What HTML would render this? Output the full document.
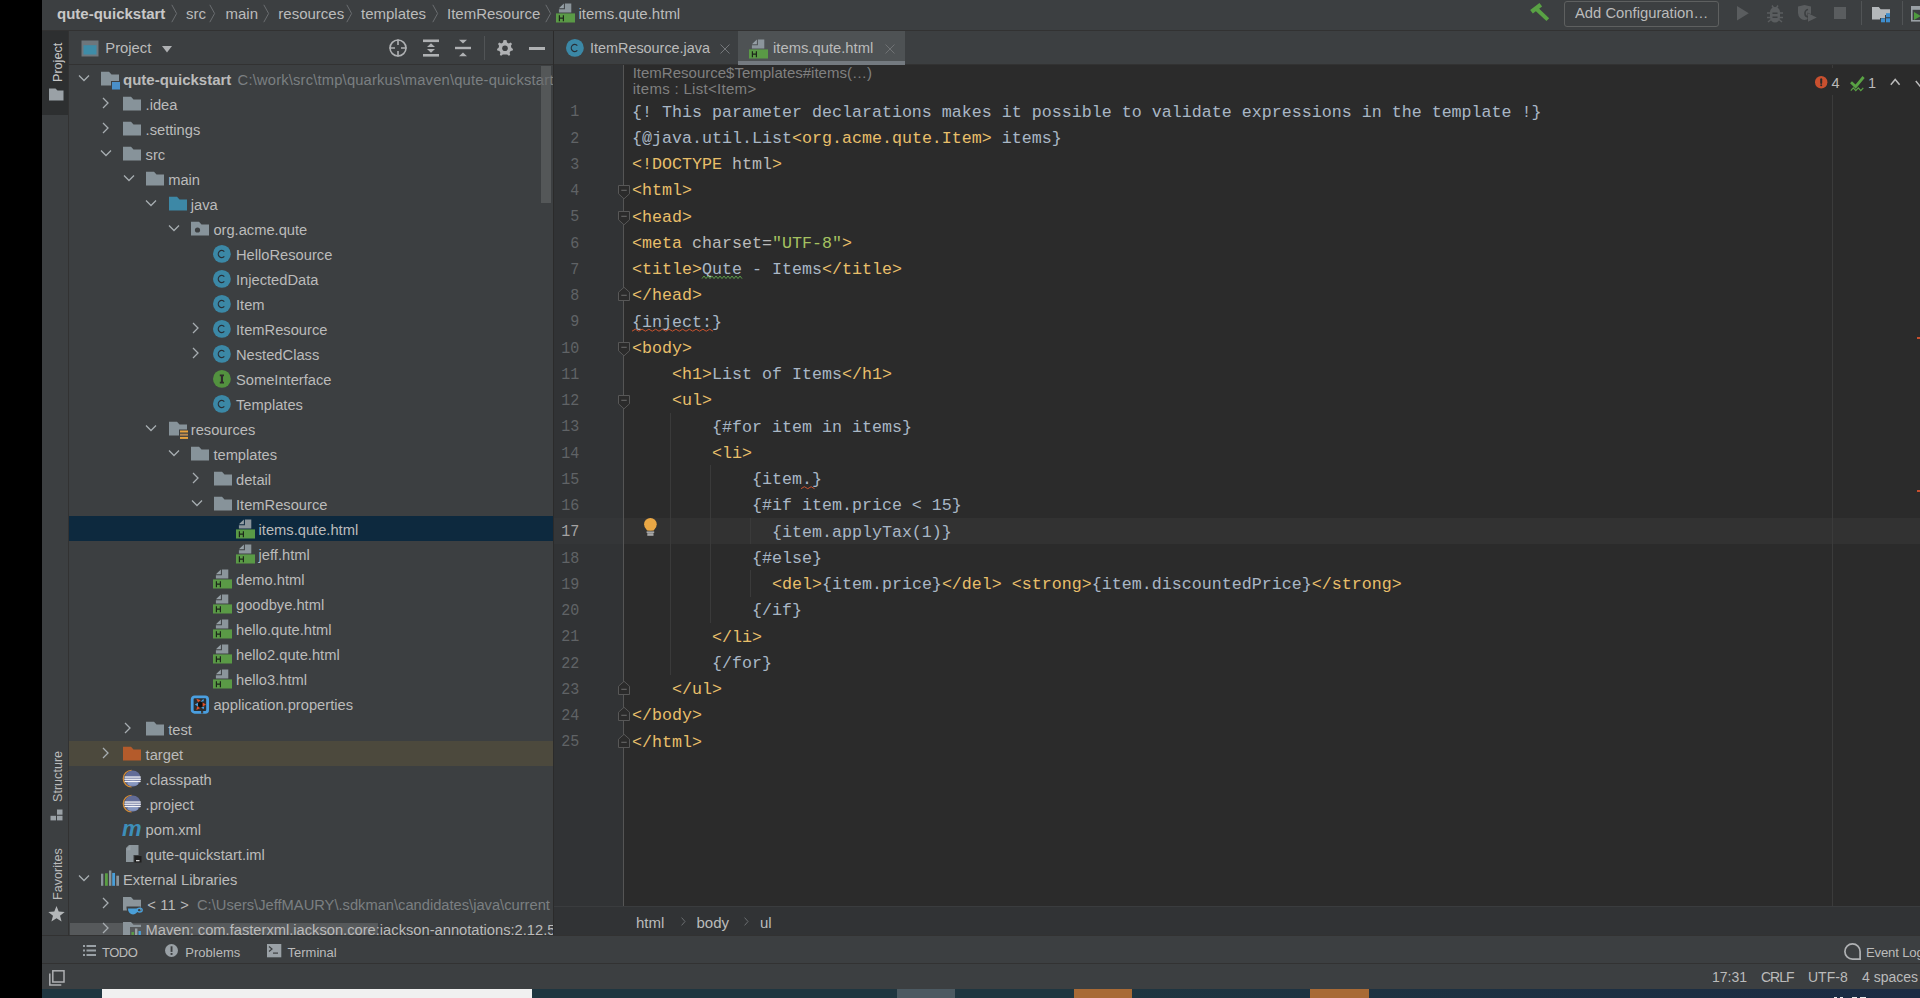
<!DOCTYPE html><html><head><meta charset="utf-8"><style>
*{margin:0;padding:0;box-sizing:border-box}
html,body{width:1920px;height:998px;overflow:hidden;background:#000}
body{position:relative;font-family:"Liberation Sans", sans-serif;color:#bbbbbb}
.a{position:absolute}
.t{position:absolute;white-space:pre;line-height:1}
svg{position:absolute;overflow:visible}
.c{font-family:"Liberation Mono", monospace;font-size:16.667px;white-space:pre;position:absolute;line-height:1;color:#a9b7c6}
.y{color:#e8bf6a} .ga{color:#bababa} .gr{color:#a5c261}
</style></head><body>
<div class="a" style="left:42px;top:0px;width:1878px;height:998px;background:#3c3f41;"></div>
<div class="a" style="left:42px;top:30px;width:1878px;height:1px;background:#323232;"></div>
<div class="a" style="left:42px;top:31px;width:26px;height:84px;background:#2d2f30;"></div>
<div class="a" style="left:68px;top:31px;width:1px;height:904px;background:#323232;"></div>
<div class="a" style="left:69px;top:64px;width:484px;height:1px;background:#323232;"></div>
<div class="a" style="left:553px;top:31px;width:1px;height:904px;background:#2b2b2b;"></div>
<div class="a" style="left:554px;top:64px;width:1366px;height:1px;background:#323232;"></div>
<div class="a" style="left:554px;top:65px;width:1366px;height:841px;background:#2b2b2b;"></div>
<div class="a" style="left:554px;top:65px;width:69px;height:841px;background:#313335;"></div>
<div class="a" style="left:554px;top:906px;width:1366px;height:29px;background:#313335;"></div>
<div class="a" style="left:554px;top:906px;width:1366px;height:1px;background:#3a3c3e;"></div>
<div class="a" style="left:42px;top:935px;width:1878px;height:28px;background:#3c3f41;"></div>
<div class="a" style="left:42px;top:935px;width:1878px;height:1px;background:#323232;"></div>
<div class="a" style="left:42px;top:963px;width:1878px;height:26px;background:#3c3f41;"></div>
<div class="a" style="left:42px;top:963px;width:1878px;height:1px;background:#323232;"></div>
<div class="a" style="left:42px;top:989px;width:1878px;height:9px;background:#1b2f3a;"></div>
<div class="a" style="left:69px;top:65px;width:484px;height:870px;overflow:hidden">
<div class="a" style="left:0px;top:451px;width:484px;height:25px;background:#0d293e;"></div>
<div class="a" style="left:0px;top:676px;width:484px;height:25px;background:#4c493d;"></div>
<div class="a" style="left:1px;top:858.4px;width:308px;height:11.6px;background:#56595b;"></div>
<svg style="left:8.500000000000004px;top:9.0px" width="12" height="8" viewBox="0 0 12 8"><path d="M1 1.5L6 6.5L11 1.5" fill="none" stroke="#a7adb1" stroke-width="1.3"/></svg>
<svg style="left:31.700000000000003px;top:4.5px" width="20" height="20" viewBox="0 0 20 20"><path d="M0 1.7H8L10.5 4.5H18V15.5H0Z" fill="#87939a"/><rect x="10" y="11" width="10.5" height="9.5" fill="#3c3f41"/><rect x="11" y="12" width="8" height="7.5" fill="#4a8fc8"/></svg>
<div class="t" style="left:54.0px;top:7.40px;font-size:15px;color:#bbbbbb;font-weight:bold;">qute-quickstart</div>
<div class="t" style="left:168.6px;top:7.66px;font-size:14.7px;color:#7b7f82;font-weight:normal;letter-spacing:0.2px">C:\work\src\tmp\quarkus\maven\qute-quickstart</div>
<svg style="left:32.500000000000014px;top:31.7px" width="8" height="12" viewBox="0 0 8 12"><path d="M1 1L6 6L1 11" fill="none" stroke="#a7adb1" stroke-width="1.3"/></svg>
<svg style="left:54.30000000000001px;top:29.5px" width="20" height="20" viewBox="0 0 20 20"><path d="M0 1.7H8L10.5 4.5H18V15.5H0Z" fill="#87939a"/></svg>
<div class="t" style="left:76.60000000000002px;top:32.66px;font-size:14.7px;color:#bbbbbb;font-weight:normal;">.idea</div>
<svg style="left:32.500000000000014px;top:56.7px" width="8" height="12" viewBox="0 0 8 12"><path d="M1 1L6 6L1 11" fill="none" stroke="#a7adb1" stroke-width="1.3"/></svg>
<svg style="left:54.30000000000001px;top:54.5px" width="20" height="20" viewBox="0 0 20 20"><path d="M0 1.7H8L10.5 4.5H18V15.5H0Z" fill="#87939a"/></svg>
<div class="t" style="left:76.60000000000002px;top:57.66px;font-size:14.7px;color:#bbbbbb;font-weight:normal;">.settings</div>
<svg style="left:31.100000000000012px;top:84.0px" width="12" height="8" viewBox="0 0 12 8"><path d="M1 1.5L6 6.5L11 1.5" fill="none" stroke="#a7adb1" stroke-width="1.3"/></svg>
<svg style="left:54.30000000000001px;top:79.5px" width="20" height="20" viewBox="0 0 20 20"><path d="M0 1.7H8L10.5 4.5H18V15.5H0Z" fill="#87939a"/></svg>
<div class="t" style="left:76.60000000000002px;top:82.66px;font-size:14.7px;color:#bbbbbb;font-weight:normal;">src</div>
<svg style="left:53.7px;top:109.0px" width="12" height="8" viewBox="0 0 12 8"><path d="M1 1.5L6 6.5L11 1.5" fill="none" stroke="#a7adb1" stroke-width="1.3"/></svg>
<svg style="left:76.9px;top:104.5px" width="20" height="20" viewBox="0 0 20 20"><path d="M0 1.7H8L10.5 4.5H18V15.5H0Z" fill="#87939a"/></svg>
<div class="t" style="left:99.20000000000002px;top:107.66px;font-size:14.7px;color:#bbbbbb;font-weight:normal;">main</div>
<svg style="left:76.3px;top:134.0px" width="12" height="8" viewBox="0 0 12 8"><path d="M1 1.5L6 6.5L11 1.5" fill="none" stroke="#a7adb1" stroke-width="1.3"/></svg>
<svg style="left:99.5px;top:129.5px" width="20" height="20" viewBox="0 0 20 20"><path d="M0 1.7H8L10.5 4.5H18V15.5H0Z" fill="#3d88a6"/></svg>
<div class="t" style="left:121.80000000000001px;top:132.66px;font-size:14.7px;color:#bbbbbb;font-weight:normal;">java</div>
<svg style="left:98.90000000000002px;top:159.0px" width="12" height="8" viewBox="0 0 12 8"><path d="M1 1.5L6 6.5L11 1.5" fill="none" stroke="#a7adb1" stroke-width="1.3"/></svg>
<svg style="left:122.10000000000002px;top:154.5px" width="20" height="20" viewBox="0 0 20 20"><path d="M0 1.7H8L10.5 4.5H18V15.5H0Z" fill="#87939a"/><circle cx="6.5" cy="10" r="2.6" fill="#3c3f41"/></svg>
<div class="t" style="left:144.40000000000003px;top:157.66px;font-size:14.7px;color:#bbbbbb;font-weight:normal;">org.acme.qute</div>
<svg style="left:143.89999999999998px;top:179.5px" width="20" height="20" viewBox="0 0 20 20"><circle cx="8.9" cy="8.9" r="8.9" fill="#3b88a6"/><path d="M11.3 6.6A3.4 3.7 0 1 0 11.3 11.4" fill="none" stroke="#283038" stroke-width="1.25"/></svg>
<div class="t" style="left:167.0px;top:182.66px;font-size:14.7px;color:#bbbbbb;font-weight:normal;">HelloResource</div>
<svg style="left:143.89999999999998px;top:204.5px" width="20" height="20" viewBox="0 0 20 20"><circle cx="8.9" cy="8.9" r="8.9" fill="#3b88a6"/><path d="M11.3 6.6A3.4 3.7 0 1 0 11.3 11.4" fill="none" stroke="#283038" stroke-width="1.25"/></svg>
<div class="t" style="left:167.0px;top:207.66px;font-size:14.7px;color:#bbbbbb;font-weight:normal;">InjectedData</div>
<svg style="left:143.89999999999998px;top:229.5px" width="20" height="20" viewBox="0 0 20 20"><circle cx="8.9" cy="8.9" r="8.9" fill="#3b88a6"/><path d="M11.3 6.6A3.4 3.7 0 1 0 11.3 11.4" fill="none" stroke="#283038" stroke-width="1.25"/></svg>
<div class="t" style="left:167.0px;top:232.66px;font-size:14.7px;color:#bbbbbb;font-weight:normal;">Item</div>
<svg style="left:122.89999999999999px;top:256.7px" width="8" height="12" viewBox="0 0 8 12"><path d="M1 1L6 6L1 11" fill="none" stroke="#a7adb1" stroke-width="1.3"/></svg>
<svg style="left:143.89999999999998px;top:254.5px" width="20" height="20" viewBox="0 0 20 20"><circle cx="8.9" cy="8.9" r="8.9" fill="#3b88a6"/><path d="M11.3 6.6A3.4 3.7 0 1 0 11.3 11.4" fill="none" stroke="#283038" stroke-width="1.25"/></svg>
<div class="t" style="left:167.0px;top:257.66px;font-size:14.7px;color:#bbbbbb;font-weight:normal;">ItemResource</div>
<svg style="left:122.89999999999999px;top:281.7px" width="8" height="12" viewBox="0 0 8 12"><path d="M1 1L6 6L1 11" fill="none" stroke="#a7adb1" stroke-width="1.3"/></svg>
<svg style="left:143.89999999999998px;top:279.5px" width="20" height="20" viewBox="0 0 20 20"><circle cx="8.9" cy="8.9" r="8.9" fill="#3b88a6"/><path d="M11.3 6.6A3.4 3.7 0 1 0 11.3 11.4" fill="none" stroke="#283038" stroke-width="1.25"/></svg>
<div class="t" style="left:167.0px;top:282.66px;font-size:14.7px;color:#bbbbbb;font-weight:normal;">NestedClass</div>
<svg style="left:143.89999999999998px;top:304.5px" width="20" height="20" viewBox="0 0 20 20"><circle cx="8.9" cy="8.9" r="8.9" fill="#53923f"/><path d="M6.8 5.4H11M8.9 5.4V12.6M6.8 12.6H11" fill="none" stroke="#2e2b2b" stroke-width="1.7"/><rect x="7.9" y="5" width="2.1" height="8" fill="#2e2b2b"/></svg>
<div class="t" style="left:167.0px;top:307.66px;font-size:14.7px;color:#bbbbbb;font-weight:normal;">SomeInterface</div>
<svg style="left:143.89999999999998px;top:329.5px" width="20" height="20" viewBox="0 0 20 20"><circle cx="8.9" cy="8.9" r="8.9" fill="#3b88a6"/><path d="M11.3 6.6A3.4 3.7 0 1 0 11.3 11.4" fill="none" stroke="#283038" stroke-width="1.25"/></svg>
<div class="t" style="left:167.0px;top:332.66px;font-size:14.7px;color:#bbbbbb;font-weight:normal;">Templates</div>
<svg style="left:76.3px;top:359.0px" width="12" height="8" viewBox="0 0 12 8"><path d="M1 1.5L6 6.5L11 1.5" fill="none" stroke="#a7adb1" stroke-width="1.3"/></svg>
<svg style="left:99.5px;top:354.5px" width="20" height="20" viewBox="0 0 20 20"><path d="M0 1.7H8L10.5 4.5H18V15.5H0Z" fill="#87939a"/><rect x="10" y="9.5" width="10" height="11" fill="#3c3f41"/><rect x="11" y="10.5" width="8" height="2" fill="#e8a33d"/><rect x="11" y="13.7" width="8" height="2" fill="#b98a52"/><rect x="11" y="16.9" width="8" height="2" fill="#e8a33d"/></svg>
<div class="t" style="left:121.80000000000001px;top:357.66px;font-size:14.7px;color:#bbbbbb;font-weight:normal;">resources</div>
<svg style="left:98.90000000000002px;top:384.0px" width="12" height="8" viewBox="0 0 12 8"><path d="M1 1.5L6 6.5L11 1.5" fill="none" stroke="#a7adb1" stroke-width="1.3"/></svg>
<svg style="left:122.10000000000002px;top:379.5px" width="20" height="20" viewBox="0 0 20 20"><path d="M0 1.7H8L10.5 4.5H18V15.5H0Z" fill="#87939a"/></svg>
<div class="t" style="left:144.40000000000003px;top:382.66px;font-size:14.7px;color:#bbbbbb;font-weight:normal;">templates</div>
<svg style="left:122.89999999999999px;top:406.7px" width="8" height="12" viewBox="0 0 8 12"><path d="M1 1L6 6L1 11" fill="none" stroke="#a7adb1" stroke-width="1.3"/></svg>
<svg style="left:144.7px;top:404.5px" width="20" height="20" viewBox="0 0 20 20"><path d="M0 1.7H8L10.5 4.5H18V15.5H0Z" fill="#87939a"/></svg>
<div class="t" style="left:167.0px;top:407.66px;font-size:14.7px;color:#bbbbbb;font-weight:normal;">detail</div>
<svg style="left:121.49999999999999px;top:434.0px" width="12" height="8" viewBox="0 0 12 8"><path d="M1 1.5L6 6.5L11 1.5" fill="none" stroke="#a7adb1" stroke-width="1.3"/></svg>
<svg style="left:144.7px;top:429.5px" width="20" height="20" viewBox="0 0 20 20"><path d="M0 1.7H8L10.5 4.5H18V15.5H0Z" fill="#87939a"/></svg>
<div class="t" style="left:167.0px;top:432.66px;font-size:14.7px;color:#bbbbbb;font-weight:normal;">ItemResource</div>
<svg style="left:166.60000000000002px;top:454.0px" width="20" height="20" viewBox="0 0 20 20"><path d="M2.9 5.2L7.9 0.4V5.2Z" fill="#96a0a6"/><path d="M8.9 0.4H15.3V9.5H2.9V6.3H8.9Z" fill="#8b959b"/><rect x="0" y="10.4" width="19" height="9.1" fill="#5a9a46"/><path d="M3.4 12.3V18.3M7.4 12.3V18.3M3.4 15.2H7.4" stroke="#1d261a" stroke-width="1.2" fill="none"/></svg>
<div class="t" style="left:189.60000000000002px;top:457.66px;font-size:14.7px;color:#bbbbbb;font-weight:normal;">items.qute.html</div>
<svg style="left:166.60000000000002px;top:479.0px" width="20" height="20" viewBox="0 0 20 20"><path d="M2.9 5.2L7.9 0.4V5.2Z" fill="#96a0a6"/><path d="M8.9 0.4H15.3V9.5H2.9V6.3H8.9Z" fill="#8b959b"/><rect x="0" y="10.4" width="19" height="9.1" fill="#5a9a46"/><path d="M3.4 12.3V18.3M7.4 12.3V18.3M3.4 15.2H7.4" stroke="#1d261a" stroke-width="1.2" fill="none"/></svg>
<div class="t" style="left:189.60000000000002px;top:482.66px;font-size:14.7px;color:#bbbbbb;font-weight:normal;">jeff.html</div>
<svg style="left:144.0px;top:504.0px" width="20" height="20" viewBox="0 0 20 20"><path d="M2.9 5.2L7.9 0.4V5.2Z" fill="#96a0a6"/><path d="M8.9 0.4H15.3V9.5H2.9V6.3H8.9Z" fill="#8b959b"/><rect x="0" y="10.4" width="19" height="9.1" fill="#5a9a46"/><path d="M3.4 12.3V18.3M7.4 12.3V18.3M3.4 15.2H7.4" stroke="#1d261a" stroke-width="1.2" fill="none"/></svg>
<div class="t" style="left:167.0px;top:507.66px;font-size:14.7px;color:#bbbbbb;font-weight:normal;">demo.html</div>
<svg style="left:144.0px;top:529.0px" width="20" height="20" viewBox="0 0 20 20"><path d="M2.9 5.2L7.9 0.4V5.2Z" fill="#96a0a6"/><path d="M8.9 0.4H15.3V9.5H2.9V6.3H8.9Z" fill="#8b959b"/><rect x="0" y="10.4" width="19" height="9.1" fill="#5a9a46"/><path d="M3.4 12.3V18.3M7.4 12.3V18.3M3.4 15.2H7.4" stroke="#1d261a" stroke-width="1.2" fill="none"/></svg>
<div class="t" style="left:167.0px;top:532.66px;font-size:14.7px;color:#bbbbbb;font-weight:normal;">goodbye.html</div>
<svg style="left:144.0px;top:554.0px" width="20" height="20" viewBox="0 0 20 20"><path d="M2.9 5.2L7.9 0.4V5.2Z" fill="#96a0a6"/><path d="M8.9 0.4H15.3V9.5H2.9V6.3H8.9Z" fill="#8b959b"/><rect x="0" y="10.4" width="19" height="9.1" fill="#5a9a46"/><path d="M3.4 12.3V18.3M7.4 12.3V18.3M3.4 15.2H7.4" stroke="#1d261a" stroke-width="1.2" fill="none"/></svg>
<div class="t" style="left:167.0px;top:557.66px;font-size:14.7px;color:#bbbbbb;font-weight:normal;">hello.qute.html</div>
<svg style="left:144.0px;top:579.0px" width="20" height="20" viewBox="0 0 20 20"><path d="M2.9 5.2L7.9 0.4V5.2Z" fill="#96a0a6"/><path d="M8.9 0.4H15.3V9.5H2.9V6.3H8.9Z" fill="#8b959b"/><rect x="0" y="10.4" width="19" height="9.1" fill="#5a9a46"/><path d="M3.4 12.3V18.3M7.4 12.3V18.3M3.4 15.2H7.4" stroke="#1d261a" stroke-width="1.2" fill="none"/></svg>
<div class="t" style="left:167.0px;top:582.66px;font-size:14.7px;color:#bbbbbb;font-weight:normal;">hello2.qute.html</div>
<svg style="left:144.0px;top:604.0px" width="20" height="20" viewBox="0 0 20 20"><path d="M2.9 5.2L7.9 0.4V5.2Z" fill="#96a0a6"/><path d="M8.9 0.4H15.3V9.5H2.9V6.3H8.9Z" fill="#8b959b"/><rect x="0" y="10.4" width="19" height="9.1" fill="#5a9a46"/><path d="M3.4 12.3V18.3M7.4 12.3V18.3M3.4 15.2H7.4" stroke="#1d261a" stroke-width="1.2" fill="none"/></svg>
<div class="t" style="left:167.0px;top:607.66px;font-size:14.7px;color:#bbbbbb;font-weight:normal;">hello3.html</div>
<svg style="left:122.10000000000002px;top:629.5px" width="20" height="20" viewBox="0 0 20 20"><rect x="1.2" y="1.9" width="15.4" height="15.4" rx="2.4" fill="#2b2e30" stroke="#4a9fe0" stroke-width="2.8"/><circle cx="9.6" cy="9.6" r="2.6" fill="#111"/><path d="M5.3 3.8L9.8 5.3L7 7.3Z M15 9.6L11.6 7.6L11.6 11.8Z M5.3 15L6.4 11L9 13.2Z" fill="#e0502a"/><path d="M12.5 3.8L9.5 6.8L12.8 6.2Z M3.8 9.6L7 7.8L7 11.4Z M12.6 14.3L10.2 12.6L13.3 11.5Z" fill="#4a9fe0"/><rect x="10" y="16" width="2.2" height="2.5" fill="#3c3f41"/></svg>
<div class="t" style="left:144.40000000000003px;top:632.66px;font-size:14.7px;color:#bbbbbb;font-weight:normal;">application.properties</div>
<svg style="left:55.10000000000001px;top:656.7px" width="8" height="12" viewBox="0 0 8 12"><path d="M1 1L6 6L1 11" fill="none" stroke="#a7adb1" stroke-width="1.3"/></svg>
<svg style="left:76.9px;top:654.5px" width="20" height="20" viewBox="0 0 20 20"><path d="M0 1.7H8L10.5 4.5H18V15.5H0Z" fill="#87939a"/></svg>
<div class="t" style="left:99.20000000000002px;top:657.66px;font-size:14.7px;color:#bbbbbb;font-weight:normal;">test</div>
<svg style="left:32.500000000000014px;top:681.7px" width="8" height="12" viewBox="0 0 8 12"><path d="M1 1L6 6L1 11" fill="none" stroke="#a7adb1" stroke-width="1.3"/></svg>
<svg style="left:54.30000000000001px;top:679.5px" width="20" height="20" viewBox="0 0 20 20"><path d="M0 1.7H8L10.5 4.5H18V15.5H0Z" fill="#b45b2b"/></svg>
<div class="t" style="left:76.60000000000002px;top:682.66px;font-size:14.7px;color:#bbbbbb;font-weight:normal;">target</div>
<svg style="left:54.30000000000001px;top:704.5px" width="20" height="20" viewBox="0 0 20 20"><path d="M8.6 0.3A8.3 8.3 0 0 0 8.6 16.9" fill="none" stroke="#d28b36" stroke-width="1.3"/><circle cx="9.6" cy="8.6" r="8.1" fill="#626c97"/><ellipse cx="9.8" cy="13.2" rx="5.2" ry="2.6" fill="#8797c0"/><rect x="1.5" y="6.4" width="16.2" height="1.3" fill="#f2f2f6"/><rect x="1.3" y="8.6" width="16.6" height="1.3" fill="#f2f2f6"/><rect x="1.6" y="10.8" width="16" height="1.3" fill="#f2f2f6"/></svg>
<div class="t" style="left:76.60000000000002px;top:707.66px;font-size:14.7px;color:#bbbbbb;font-weight:normal;">.classpath</div>
<svg style="left:54.30000000000001px;top:729.5px" width="20" height="20" viewBox="0 0 20 20"><path d="M8.6 0.3A8.3 8.3 0 0 0 8.6 16.9" fill="none" stroke="#d28b36" stroke-width="1.3"/><circle cx="9.6" cy="8.6" r="8.1" fill="#626c97"/><ellipse cx="9.8" cy="13.2" rx="5.2" ry="2.6" fill="#8797c0"/><rect x="1.5" y="6.4" width="16.2" height="1.3" fill="#f2f2f6"/><rect x="1.3" y="8.6" width="16.6" height="1.3" fill="#f2f2f6"/><rect x="1.6" y="10.8" width="16" height="1.3" fill="#f2f2f6"/></svg>
<div class="t" style="left:76.60000000000002px;top:732.66px;font-size:14.7px;color:#bbbbbb;font-weight:normal;">.project</div>
<svg style="left:54.30000000000001px;top:754.5px" width="20" height="20" viewBox="0 0 20 20"><text x="-1" y="16" font-family="Liberation Sans" font-style="italic" font-weight="bold" font-size="22" fill="#3d8eb9">m</text></svg>
<div class="t" style="left:76.60000000000002px;top:757.66px;font-size:14.7px;color:#bbbbbb;font-weight:normal;">pom.xml</div>
<svg style="left:54.30000000000001px;top:779.5px" width="20" height="20" viewBox="0 0 20 20"><path d="M6 0H15.5V17H3V3Z" fill="#8b959b"/><path d="M3 5.3L7.5 0.3V5.3Z" fill="#97a1a7"/><rect x="10.5" y="10" width="8.5" height="8" fill="#3c3f41"/><rect x="11.5" y="11" width="7" height="6.5" fill="#1e1e1e"/><rect x="13" y="15" width="3.5" height="1.3" fill="#d8d8d8"/></svg>
<div class="t" style="left:76.60000000000002px;top:782.66px;font-size:14.7px;color:#bbbbbb;font-weight:normal;">qute-quickstart.iml</div>
<svg style="left:8.500000000000004px;top:809.0px" width="12" height="8" viewBox="0 0 12 8"><path d="M1 1.5L6 6.5L11 1.5" fill="none" stroke="#a7adb1" stroke-width="1.3"/></svg>
<svg style="left:31.700000000000003px;top:804.5px" width="20" height="20" viewBox="0 0 20 20"><rect x="0" y="3.7" width="2.3" height="12.1" fill="#8b959b"/><rect x="4" y="3.3" width="2.8" height="12.5" fill="#5a9e44"/><rect x="8" y="0.5" width="2.4" height="15.3" fill="#8b959b"/><rect x="11.2" y="2.9" width="2.8" height="12.9" fill="#4a9fd8"/><rect x="15.3" y="5.7" width="2.7" height="10.1" fill="#8b959b"/></svg>
<div class="t" style="left:54.0px;top:807.66px;font-size:14.7px;color:#bbbbbb;font-weight:normal;">External Libraries</div>
<svg style="left:32.500000000000014px;top:831.7px" width="8" height="12" viewBox="0 0 8 12"><path d="M1 1L6 6L1 11" fill="none" stroke="#a7adb1" stroke-width="1.3"/></svg>
<svg style="left:54.30000000000001px;top:829.5px" width="20" height="20" viewBox="0 0 20 20"><path d="M0 2H8L10.5 4.8H18V15.6H0Z" fill="#8b959b"/><path d="M3.5 12.6H17.5V14A6 6.5 0 0 1 3.5 14Z" fill="#3c3f41" transform="translate(0,-1)"/><path d="M4.9 13.6H15.2A5.15 6 0 0 1 4.9 13.6Z" fill="#4a9fd8"/><ellipse cx="16.6" cy="15.1" rx="2.6" ry="1.9" fill="none" stroke="#4a9fd8" stroke-width="1.4"/></svg>
<div class="t" style="left:78.20000000000002px;top:832.66px;font-size:14.7px;color:#bbbbbb;font-weight:normal;letter-spacing:0.2px">&lt; 11 &gt;</div>
<div class="t" style="left:128px;top:832.66px;font-size:14.7px;color:#7b7f82;font-weight:normal;">C:\Users\JeffMAURY\.sdkman\candidates\java\current</div>
<svg style="left:32.500000000000014px;top:856.7px" width="8" height="12" viewBox="0 0 8 12"><path d="M1 1L6 6L1 11" fill="none" stroke="#a7adb1" stroke-width="1.3"/></svg>
<svg style="left:54.30000000000001px;top:854.5px" width="20" height="20" viewBox="0 0 20 20"><path d="M0 2H8L10.5 4.8H18V15.6H0Z" fill="#8b959b"/><rect x="7" y="7" width="13" height="13" fill="#56595b"/><rect x="8.5" y="12" width="2.4" height="8" fill="#5a9e44"/><rect x="12" y="8.5" width="2.4" height="11.5" fill="#9aa1a6"/><rect x="15.5" y="11" width="2.4" height="9" fill="#4a9fd8"/></svg>
<div class="t" style="left:76.60000000000002px;top:857.66px;font-size:14.7px;color:#bbbbbb;font-weight:normal;">Maven: com.fasterxml.jackson.core:jackson-annotations:2.12.5</div>
<div class="a" style="left:472px;top:1px;width:10px;height:137px;background:rgba(100,102,104,0.62);"></div>
</div>
<div class="t" style="left:57px;top:6.00px;font-size:15px;color:#c8c8c8;font-weight:bold;">qute-quickstart</div>
<svg style="left:171px;top:4px" width="7" height="19" viewBox="0 0 7 19"><path d="M0.8 0.8L5.6 9.5L0.8 18.2" fill="none" stroke="#6a6d70" stroke-width="1"/></svg>
<div class="t" style="left:186px;top:6.00px;font-size:15px;color:#bbbbbb;font-weight:normal;">src</div>
<svg style="left:209px;top:4px" width="7" height="19" viewBox="0 0 7 19"><path d="M0.8 0.8L5.6 9.5L0.8 18.2" fill="none" stroke="#6a6d70" stroke-width="1"/></svg>
<div class="t" style="left:225.5px;top:6.00px;font-size:15px;color:#bbbbbb;font-weight:normal;">main</div>
<svg style="left:263px;top:4px" width="7" height="19" viewBox="0 0 7 19"><path d="M0.8 0.8L5.6 9.5L0.8 18.2" fill="none" stroke="#6a6d70" stroke-width="1"/></svg>
<div class="t" style="left:278.3px;top:6.00px;font-size:15px;color:#bbbbbb;font-weight:normal;">resources</div>
<svg style="left:346.4px;top:4px" width="7" height="19" viewBox="0 0 7 19"><path d="M0.8 0.8L5.6 9.5L0.8 18.2" fill="none" stroke="#6a6d70" stroke-width="1"/></svg>
<div class="t" style="left:361px;top:6.00px;font-size:15px;color:#bbbbbb;font-weight:normal;">templates</div>
<svg style="left:432px;top:4px" width="7" height="19" viewBox="0 0 7 19"><path d="M0.8 0.8L5.6 9.5L0.8 18.2" fill="none" stroke="#6a6d70" stroke-width="1"/></svg>
<div class="t" style="left:447px;top:6.00px;font-size:15px;color:#bbbbbb;font-weight:normal;">ItemResource</div>
<svg style="left:544.5px;top:4px" width="7" height="19" viewBox="0 0 7 19"><path d="M0.8 0.8L5.6 9.5L0.8 18.2" fill="none" stroke="#6a6d70" stroke-width="1"/></svg>
<svg style="left:556px;top:3.2px" width="20" height="20" viewBox="0 0 20 20"><path d="M2.9 5.2L7.9 0.4V5.2Z" fill="#96a0a6"/><path d="M8.9 0.4H15.3V9.5H2.9V6.3H8.9Z" fill="#8b959b"/><rect x="0" y="10.4" width="19" height="9.1" fill="#5a9a46"/><path d="M3.4 12.3V18.3M7.4 12.3V18.3M3.4 15.2H7.4" stroke="#1d261a" stroke-width="1.2" fill="none"/></svg>
<div class="t" style="left:578.5px;top:6.00px;font-size:15px;color:#bbbbbb;font-weight:normal;">items.qute.html</div>
<svg style="left:1525px;top:0px" width="30" height="28" viewBox="0 0 30 28"><path d="M6.5 11.8L15.8 4.8" stroke="#59a244" stroke-width="4.4" fill="none"/><path d="M11.2 8.8L22.8 19.6" stroke="#59a244" stroke-width="4" fill="none"/></svg>
<div class="a" style="left:1563.5px;top:0.5px;width:155px;height:26px;background:transparent;border:1px solid #5e6060;border-radius:3px"></div>
<div class="t" style="left:1575px;top:5.97px;font-size:14.8px;color:#bbbbbb;font-weight:normal;">Add Configuration…</div>
<svg style="left:1737px;top:5.7px" width="12" height="15" viewBox="0 0 12 15"><path d="M0 0L11.8 7.3L0 14.6Z" fill="#5a5d5f"/></svg>
<svg style="left:1767px;top:4.5px" width="16" height="18" viewBox="0 0 16 18"><path d="M5 0.5L7 3.5M11 0.5L9 3.5" stroke="#5a5d5f" stroke-width="1.4"/><path d="M3 7A5 5 0 0 1 13 7V12A5 5.5 0 0 1 3 12Z" fill="#5a5d5f"/><path d="M0 8H16M0 12.5H16M1 17L4 14.5M15 17L12 14.5" stroke="#5a5d5f" stroke-width="1.5"/><path d="M5.5 8.2H10.5M5.5 12.2H10.5" stroke="#3c3f41" stroke-width="1.4"/></svg>
<svg style="left:1798px;top:5.4px" width="20" height="18" viewBox="0 0 20 18"><path d="M0 1.5L6.5 0L13 1.5V8A6.5 7.5 0 0 1 6.5 15A6.5 7.5 0 0 1 0 8Z" fill="#5a5d5f"/><path d="M10 4.5A3.5 3.5 0 0 0 7 8.5A3.5 3.5 0 0 0 10 12" fill="none" stroke="#3c3f41" stroke-width="1.6"/><path d="M9.5 7.5L19 12.5L9.5 17.4Z" fill="#3c3f41"/><path d="M10 8.2L18.8 12.5L10 16.8Z" fill="#5a5d5f"/></svg>
<div class="a" style="left:1834px;top:6.7px;width:12.2px;height:12.4px;background:#5a5d5f;"></div>
<div class="a" style="left:1860.5px;top:1px;width:1px;height:24px;background:#515456;"></div>
<svg style="left:1872px;top:6.7px" width="20" height="16" viewBox="0 0 20 16"><path d="M0 0H6.8L8.6 2.3H18V8H13V11H8V12.6H0Z" fill="#b4b8bb"/><rect x="14" y="6.2" width="4" height="4" fill="#3e8ecf"/><rect x="9" y="11.3" width="4" height="4" fill="#3e8ecf"/><rect x="14" y="11.3" width="4" height="4" fill="#3e8ecf"/></svg>
<div class="a" style="left:1901.5px;top:1px;width:1px;height:24px;background:#515456;"></div>
<svg style="left:1911px;top:5.5px" width="12" height="16" viewBox="0 0 12 16"><rect x="0.8" y="0.8" width="14" height="14" fill="none" stroke="#9aa1a6" stroke-width="1.6"/><rect x="0.8" y="0.8" width="14" height="3" fill="#9aa1a6"/><path d="M3 6L10 10L3 14Z" fill="#4e9a3e"/></svg>
<div class="t" style="left:52.3px;top:82px;font-size:12.6px;color:#c8c8c8;transform:rotate(-90deg);transform-origin:0 0;">Project</div>
<svg style="left:49px;top:88px" width="16" height="13" viewBox="0 0 16 13"><path d="M0 0.5H6.5L8.5 2.5H14.5V12.5H0Z" fill="#9aa1a6"/></svg>
<div class="t" style="left:52.3px;top:802px;font-size:12.6px;color:#bbbbbb;transform:rotate(-90deg);transform-origin:0 0;">Structure</div>
<svg style="left:50px;top:809px" width="14" height="13" viewBox="0 0 14 13"><rect x="7" y="0.5" width="5.5" height="5.2" fill="#9aa1a6"/><rect x="0.5" y="6.8" width="5.5" height="4.6" fill="#9aa1a6"/><rect x="7" y="6.8" width="5.5" height="4.6" fill="#9aa1a6"/></svg>
<div class="t" style="left:52.3px;top:900px;font-size:12.6px;color:#bbbbbb;transform:rotate(-90deg);transform-origin:0 0;">Favorites</div>
<svg style="left:48px;top:906px" width="17" height="16" viewBox="0 0 17 16"><path d="M8.5 0L10.7 5.6L16.7 5.9L12 9.7L13.6 15.6L8.5 12.3L3.4 15.6L5 9.7L0.3 5.9L6.3 5.6Z" fill="#b4b7b9"/></svg>
<svg style="left:81px;top:40px" width="18" height="17" viewBox="0 0 18 17"><rect x="0.5" y="0.5" width="17" height="16" fill="#6e767c"/><rect x="2.5" y="5.2" width="13" height="9.3" fill="#3e8ca8"/></svg>
<div class="t" style="left:105.3px;top:40.97px;font-size:14.8px;color:#bbbbbb;font-weight:normal;">Project</div>
<svg style="left:162px;top:46px" width="10" height="7" viewBox="0 0 10 7"><path d="M0 0H10L5 6.5Z" fill="#afb1b3"/></svg>
<svg style="left:389px;top:39px" width="18" height="18" viewBox="0 0 18 18"><circle cx="9" cy="9" r="8" fill="none" stroke="#afb1b3" stroke-width="1.6"/><path d="M9 0.5V6M9 12V17.5M0.5 9H6M12 9H17.5" stroke="#afb1b3" stroke-width="1.6"/></svg>
<svg style="left:423px;top:39px" width="16" height="18" viewBox="0 0 16 18"><rect x="0" y="0.5" width="16" height="2.6" fill="#afb1b3"/><rect x="0" y="15" width="16" height="2.6" fill="#afb1b3"/><path d="M4 8H12L8 4.2Z M4 10H12L8 13.8Z" fill="#afb1b3"/></svg>
<svg style="left:455px;top:39px" width="16" height="18" viewBox="0 0 16 18"><rect x="0" y="7.8" width="16" height="2.4" fill="#afb1b3"/><path d="M4 0.8H12L8 4.6Z M4 17.2H12L8 13.4Z" fill="#afb1b3"/></svg>
<div class="a" style="left:483.5px;top:36px;width:1px;height:24px;background:#515456;"></div>
<svg style="left:497px;top:40px" width="16" height="16" viewBox="0 0 16 16"><path d="M8 0L9.6 0.2L10 2.4L11.8 3.4L13.8 2.4L15 3.9L13.9 5.8L14.4 7.8L16 8.9L15.7 10.4L13.6 11L12.6 12.8L13.2 14.9L11.8 15.8L10.2 14.4H8H5.8L4.2 15.8L2.8 14.9L3.4 12.8L2.4 11L0.3 10.4L0 8.9L1.6 7.8L2.1 5.8L1 3.9L2.2 2.4L4.2 3.4L6 2.4L6.4 0.2Z" fill="#afb1b3"/><circle cx="8" cy="8.2" r="2.8" fill="#3c3f41"/></svg>
<div class="a" style="left:529.2px;top:46.5px;width:15.6px;height:3px;background:#afb1b3;"></div>
<svg style="left:566px;top:39px" width="18" height="18" viewBox="0 0 18 18"><circle cx="8.9" cy="8.9" r="8.9" fill="#3b88a6"/><path d="M11.3 6.6A3.4 3.7 0 1 0 11.3 11.4" fill="none" stroke="#283038" stroke-width="1.25"/></svg>
<div class="t" style="left:590px;top:41.31px;font-size:14.4px;color:#bbbbbb;font-weight:normal;">ItemResource.java</div>
<svg style="left:720.3px;top:43.5px" width="10" height="10" viewBox="0 0 10 10"><path d="M0.5 0.5L9.5 9.5M9.5 0.5L0.5 9.5" stroke="#74777a" stroke-width="1"/></svg>
<div class="a" style="left:738px;top:31px;width:167px;height:33px;background:#4e5254;"></div>
<div class="a" style="left:738px;top:61px;width:167px;height:4px;background:#747a80;"></div>
<svg style="left:749px;top:38.6px" width="20" height="20" viewBox="0 0 20 20"><path d="M2.9 5.2L7.9 0.4V5.2Z" fill="#96a0a6"/><path d="M8.9 0.4H15.3V9.5H2.9V6.3H8.9Z" fill="#8b959b"/><rect x="0" y="10.4" width="19" height="9.1" fill="#5a9a46"/><path d="M3.4 12.3V18.3M7.4 12.3V18.3M3.4 15.2H7.4" stroke="#1d261a" stroke-width="1.2" fill="none"/></svg>
<div class="t" style="left:773px;top:40.97px;font-size:14.8px;color:#bbbbbb;font-weight:normal;">items.qute.html</div>
<svg style="left:885px;top:43.5px" width="10" height="10" viewBox="0 0 10 10"><path d="M0.5 0.5L9.5 9.5M9.5 0.5L0.5 9.5" stroke="#6f7274" stroke-width="1"/></svg>
<div class="a" style="left:624px;top:517.8px;width:1296px;height:26.25px;background:#323232;"></div>
<div class="a" style="left:554px;top:517.8px;width:69px;height:26.25px;background:#343638;"></div>
<div class="a" style="left:623px;top:65px;width:1px;height:841px;background:#555555;"></div>
<div class="a" style="left:1832px;top:65px;width:1px;height:3px;background:#3b3b3b;"></div>
<div class="a" style="left:1832px;top:95px;width:1px;height:811px;background:#3b3b3b;"></div>
<div class="a" style="left:670px;top:412.8px;width:1px;height:262.49999999999994px;background:#3a3a3a;"></div>
<div class="a" style="left:710px;top:465.3px;width:1px;height:157.49999999999994px;background:#3a3a3a;"></div>
<div class="a" style="left:750px;top:517.8px;width:1px;height:26.25px;background:#3a3a3a;"></div>
<div class="a" style="left:750px;top:570.3px;width:1px;height:26.25px;background:#3a3a3a;"></div>
<div class="t" style="left:632.7px;top:64.90px;font-size:15px;color:#808080;font-weight:normal;">ItemResource$Templates#items(…)</div>
<div class="t" style="left:632.7px;top:80.90px;font-size:15px;color:#808080;font-weight:normal;letter-spacing:0.3px">items : List&lt;Item&gt;</div>
<div class="c" style="left:570.3px;top:105.30px;font-size:15px;color:#606366;transform:scaleY(1.13);transform-origin:0 11.5px">1</div>
<div class="c" style="left:570.3px;top:131.55px;font-size:15px;color:#606366;transform:scaleY(1.13);transform-origin:0 11.5px">2</div>
<div class="c" style="left:570.3px;top:157.80px;font-size:15px;color:#606366;transform:scaleY(1.13);transform-origin:0 11.5px">3</div>
<div class="c" style="left:570.3px;top:184.05px;font-size:15px;color:#606366;transform:scaleY(1.13);transform-origin:0 11.5px">4</div>
<div class="c" style="left:570.3px;top:210.30px;font-size:15px;color:#606366;transform:scaleY(1.13);transform-origin:0 11.5px">5</div>
<div class="c" style="left:570.3px;top:236.55px;font-size:15px;color:#606366;transform:scaleY(1.13);transform-origin:0 11.5px">6</div>
<div class="c" style="left:570.3px;top:262.80px;font-size:15px;color:#606366;transform:scaleY(1.13);transform-origin:0 11.5px">7</div>
<div class="c" style="left:570.3px;top:289.05px;font-size:15px;color:#606366;transform:scaleY(1.13);transform-origin:0 11.5px">8</div>
<div class="c" style="left:570.3px;top:315.30px;font-size:15px;color:#606366;transform:scaleY(1.13);transform-origin:0 11.5px">9</div>
<div class="c" style="left:561.3px;top:341.55px;font-size:15px;color:#606366;transform:scaleY(1.13);transform-origin:0 11.5px">10</div>
<div class="c" style="left:561.3px;top:367.80px;font-size:15px;color:#606366;transform:scaleY(1.13);transform-origin:0 11.5px">11</div>
<div class="c" style="left:561.3px;top:394.05px;font-size:15px;color:#606366;transform:scaleY(1.13);transform-origin:0 11.5px">12</div>
<div class="c" style="left:561.3px;top:420.30px;font-size:15px;color:#606366;transform:scaleY(1.13);transform-origin:0 11.5px">13</div>
<div class="c" style="left:561.3px;top:446.55px;font-size:15px;color:#606366;transform:scaleY(1.13);transform-origin:0 11.5px">14</div>
<div class="c" style="left:561.3px;top:472.80px;font-size:15px;color:#606366;transform:scaleY(1.13);transform-origin:0 11.5px">15</div>
<div class="c" style="left:561.3px;top:499.05px;font-size:15px;color:#606366;transform:scaleY(1.13);transform-origin:0 11.5px">16</div>
<div class="c" style="left:561.3px;top:525.30px;font-size:15px;color:#a4a3a3;transform:scaleY(1.13);transform-origin:0 11.5px">17</div>
<div class="c" style="left:561.3px;top:551.55px;font-size:15px;color:#606366;transform:scaleY(1.13);transform-origin:0 11.5px">18</div>
<div class="c" style="left:561.3px;top:577.80px;font-size:15px;color:#606366;transform:scaleY(1.13);transform-origin:0 11.5px">19</div>
<div class="c" style="left:561.3px;top:604.05px;font-size:15px;color:#606366;transform:scaleY(1.13);transform-origin:0 11.5px">20</div>
<div class="c" style="left:561.3px;top:630.30px;font-size:15px;color:#606366;transform:scaleY(1.13);transform-origin:0 11.5px">21</div>
<div class="c" style="left:561.3px;top:656.55px;font-size:15px;color:#606366;transform:scaleY(1.13);transform-origin:0 11.5px">22</div>
<div class="c" style="left:561.3px;top:682.80px;font-size:15px;color:#606366;transform:scaleY(1.13);transform-origin:0 11.5px">23</div>
<div class="c" style="left:561.3px;top:709.05px;font-size:15px;color:#606366;transform:scaleY(1.13);transform-origin:0 11.5px">24</div>
<div class="c" style="left:561.3px;top:735.30px;font-size:15px;color:#606366;transform:scaleY(1.13);transform-origin:0 11.5px">25</div>
<svg style="left:618px;top:184.75px" width="12" height="14" viewBox="0 0 12 14"><path d="M0.5 0.5H11.5V8.8L6 13.8L0.5 8.8Z" fill="#2b2b2b" stroke="#575757" stroke-width="1"/><path d="M3.3 5.3H8.7" stroke="#676767" stroke-width="1.1"/></svg>
<svg style="left:618px;top:211.0px" width="12" height="14" viewBox="0 0 12 14"><path d="M0.5 0.5H11.5V8.8L6 13.8L0.5 8.8Z" fill="#2b2b2b" stroke="#575757" stroke-width="1"/><path d="M3.3 5.3H8.7" stroke="#676767" stroke-width="1.1"/></svg>
<svg style="left:618px;top:342.25px" width="12" height="14" viewBox="0 0 12 14"><path d="M0.5 0.5H11.5V8.8L6 13.8L0.5 8.8Z" fill="#2b2b2b" stroke="#575757" stroke-width="1"/><path d="M3.3 5.3H8.7" stroke="#676767" stroke-width="1.1"/></svg>
<svg style="left:618px;top:394.75px" width="12" height="14" viewBox="0 0 12 14"><path d="M0.5 0.5H11.5V8.8L6 13.8L0.5 8.8Z" fill="#2b2b2b" stroke="#575757" stroke-width="1"/><path d="M3.3 5.3H8.7" stroke="#676767" stroke-width="1.1"/></svg>
<svg style="left:618px;top:287.45px" width="12" height="14" viewBox="0 0 12 14"><path d="M0.5 13.5H11.5V5.2L6 0.3L0.5 5.2Z" fill="#2b2b2b" stroke="#575757" stroke-width="1"/><path d="M3.3 8.3H8.7" stroke="#676767" stroke-width="1.1"/></svg>
<svg style="left:618px;top:681.2px" width="12" height="14" viewBox="0 0 12 14"><path d="M0.5 13.5H11.5V5.2L6 0.3L0.5 5.2Z" fill="#2b2b2b" stroke="#575757" stroke-width="1"/><path d="M3.3 8.3H8.7" stroke="#676767" stroke-width="1.1"/></svg>
<svg style="left:618px;top:707.45px" width="12" height="14" viewBox="0 0 12 14"><path d="M0.5 13.5H11.5V5.2L6 0.3L0.5 5.2Z" fill="#2b2b2b" stroke="#575757" stroke-width="1"/><path d="M3.3 8.3H8.7" stroke="#676767" stroke-width="1.1"/></svg>
<svg style="left:618px;top:733.7px" width="12" height="14" viewBox="0 0 12 14"><path d="M0.5 13.5H11.5V5.2L6 0.3L0.5 5.2Z" fill="#2b2b2b" stroke="#575757" stroke-width="1"/><path d="M3.3 8.3H8.7" stroke="#676767" stroke-width="1.1"/></svg>
<div class="c" style="left:632px;top:104.72px">{! This parameter declarations makes it possible to validate expressions in the template !}</div>
<div class="c" style="left:632px;top:130.97px">{@java.util.List<span class="y">&lt;org.acme.qute.Item&gt;</span> items}</div>
<div class="c" style="left:632px;top:157.22px"><span class="y">&lt;!DOCTYPE</span><span class="ga"> html</span><span class="y">&gt;</span></div>
<div class="c" style="left:632px;top:183.47px"><span class="y">&lt;html&gt;</span></div>
<div class="c" style="left:632px;top:209.72px"><span class="y">&lt;head&gt;</span></div>
<div class="c" style="left:632px;top:235.97px"><span class="y">&lt;meta</span><span class="ga"> charset=</span><span class="gr">&quot;UTF-8&quot;</span><span class="y">&gt;</span></div>
<div class="c" style="left:632px;top:262.22px"><span class="y">&lt;title&gt;</span>Qute - Items<span class="y">&lt;/title&gt;</span></div>
<div class="c" style="left:632px;top:288.47px"><span class="y">&lt;/head&gt;</span></div>
<div class="c" style="left:632px;top:314.72px">{inject:}</div>
<div class="c" style="left:632px;top:340.97px"><span class="y">&lt;body&gt;</span></div>
<div class="c" style="left:632px;top:367.22px">    <span class="y">&lt;h1&gt;</span>List of Items<span class="y">&lt;/h1&gt;</span></div>
<div class="c" style="left:632px;top:393.47px">    <span class="y">&lt;ul&gt;</span></div>
<div class="c" style="left:632px;top:419.72px">        {#for item in items}</div>
<div class="c" style="left:632px;top:445.97px">        <span class="y">&lt;li&gt;</span></div>
<div class="c" style="left:632px;top:472.22px">            {item.}</div>
<div class="c" style="left:632px;top:498.47px">            {#if item.price &lt; 15}</div>
<div class="c" style="left:632px;top:524.72px">              {item.applyTax(1)}</div>
<div class="c" style="left:632px;top:550.97px">            {#else}</div>
<div class="c" style="left:632px;top:577.22px">              <span class="y">&lt;del&gt;</span>{item.price}<span class="y">&lt;/del&gt;</span> <span class="y">&lt;strong&gt;</span>{item.discountedPrice}<span class="y">&lt;/strong&gt;</span></div>
<div class="c" style="left:632px;top:603.47px">            {/if}</div>
<div class="c" style="left:632px;top:629.72px">        <span class="y">&lt;/li&gt;</span></div>
<div class="c" style="left:632px;top:655.97px">        {/for}</div>
<div class="c" style="left:632px;top:682.22px">    <span class="y">&lt;/ul&gt;</span></div>
<div class="c" style="left:632px;top:708.47px"><span class="y">&lt;/body&gt;</span></div>
<div class="c" style="left:632px;top:734.72px"><span class="y">&lt;/html&gt;</span></div>
<svg style="left:0;top:0" width="1" height="1"><path d="M702 278.6 l2.0 -2.6 l2.0 2.6 l2.0 -2.6 l2.0 2.6 l2.0 -2.6 l2.0 2.6 l2.0 -2.6 l2.0 2.6 l2.0 -2.6 l2.0 2.6 l2.0 -2.6 l2.0 2.6 l2.0 -2.6 l2.0 2.6 l2.0 -2.6 l2.0 2.6 l2.0 -2.6 l2.0 2.6 l2.0 -2.6 l2.0 2.6" fill="none" stroke="#5c9e4a" stroke-width="1"/></svg>
<svg style="left:0;top:0" width="1" height="1"><path d="M632 331.2 l3.375 -2 l3.375 2 l3.375 -2 l3.375 2 l3.375 -2 l3.375 2 l3.375 -2 l3.375 2 l3.375 -2 l3.375 2 l3.375 -2 l3.375 2 l3.375 -2 l3.375 2 l3.375 -2 l3.375 2 l3.375 -2 l3.375 2 l3.375 -2 l3.375 2 l3.375 -2 l3.375 2 l3.375 -2 l3.375 2" fill="none" stroke="#c9532f" stroke-width="1"/></svg>
<svg style="left:0;top:0" width="1" height="1"><path d="M801 488.7 l3.375 -2 l3.375 2 l3.375 -2 l3.375 2" fill="none" stroke="#c9532f" stroke-width="1"/></svg>
<svg style="left:643.7px;top:518px" width="14" height="19" viewBox="0 0 14 19"><circle cx="6.4" cy="6.3" r="6.3" fill="#e9a745"/><path d="M1.5 9.5H11.3L9.8 12.6H3Z" fill="#e9a745"/><rect x="2.6" y="13.5" width="7.6" height="1.3" fill="#c4c4c4"/><rect x="3.3" y="15.2" width="6.2" height="2.6" fill="#a9a9a9"/></svg>
<svg style="left:1814.9px;top:75.7px" width="13" height="13" viewBox="0 0 13 13"><circle cx="6.2" cy="6.25" r="6.2" fill="#c9502f"/><path d="M6.2 3.3V6.9" stroke="#2b2b2b" stroke-width="2" stroke-linecap="round"/><circle cx="6.2" cy="9.2" r="1" fill="#2b2b2b"/></svg>
<div class="t" style="left:1831.5px;top:75.63px;font-size:14.5px;color:#bbbbbb;font-weight:normal;">4</div>
<svg style="left:1849.5px;top:76px" width="16" height="16" viewBox="0 0 16 16"><path d="M1 6.3L5.6 10.6L13.6 1" fill="none" stroke="#59a244" stroke-width="2.8"/><path d="M0.8 14.6L3.3 11.8L5.8 14.6L8.3 11.8L10.8 14.6L13.3 11.8" fill="none" stroke="#59a244" stroke-width="1.2"/></svg>
<div class="t" style="left:1868px;top:75.63px;font-size:14.5px;color:#bbbbbb;font-weight:normal;">1</div>
<svg style="left:1889.7px;top:77.6px" width="12" height="8" viewBox="0 0 12 8"><path d="M0.8 6.8L5.2 1.5L9.6 6.8" fill="none" stroke="#bbbbbb" stroke-width="1.5"/></svg>
<svg style="left:1914.5px;top:79.5px" width="12" height="8" viewBox="0 0 12 8"><path d="M0.8 1L5.2 6.3L9.6 1" fill="none" stroke="#bbbbbb" stroke-width="1.5"/></svg>
<div class="a" style="left:1917px;top:337px;width:3px;height:2px;background:#c7502f;"></div>
<div class="a" style="left:1917px;top:490px;width:3px;height:2px;background:#c7502f;"></div>
<div class="t" style="left:636px;top:915.30px;font-size:15px;color:#bbbbbb;font-weight:normal;">html</div>
<svg style="left:680.5px;top:917px" width="5" height="9" viewBox="0 0 5 9"><path d="M0.6 0.6L4 4.5L0.6 8.4" fill="none" stroke="#6a6d70" stroke-width="1"/></svg>
<div class="t" style="left:696.5px;top:915.30px;font-size:15px;color:#bbbbbb;font-weight:normal;">body</div>
<svg style="left:744px;top:917px" width="5" height="9" viewBox="0 0 5 9"><path d="M0.6 0.6L4 4.5L0.6 8.4" fill="none" stroke="#6a6d70" stroke-width="1"/></svg>
<div class="t" style="left:760px;top:915.30px;font-size:15px;color:#bbbbbb;font-weight:normal;">ul</div>
<svg style="left:83px;top:945px" width="13" height="11" viewBox="0 0 13 11"><rect x="0" y="0" width="2" height="2" fill="#9aa1a6"/><rect x="3.5" y="0" width="9.5" height="2" fill="#9aa1a6"/><rect x="0" y="4.5" width="2" height="2" fill="#9aa1a6"/><rect x="3.5" y="4.5" width="9.5" height="2" fill="#9aa1a6"/><rect x="0" y="9" width="2" height="2" fill="#9aa1a6"/><rect x="3.5" y="9" width="9.5" height="2" fill="#9aa1a6"/></svg>
<div class="t" style="left:102px;top:945.80px;font-size:13px;color:#bbbbbb;font-weight:normal;letter-spacing:-0.5px">TODO</div>
<svg style="left:165px;top:944px" width="13" height="13" viewBox="0 0 13 13"><circle cx="6.5" cy="6.5" r="6.5" fill="#9aa1a6"/><rect x="5.6" y="2.3" width="1.9" height="5.6" fill="#3c3f41"/><rect x="5.6" y="9" width="1.9" height="1.9" fill="#3c3f41"/></svg>
<div class="t" style="left:185.3px;top:945.80px;font-size:13px;color:#bbbbbb;font-weight:normal;">Problems</div>
<svg style="left:266.5px;top:943.5px" width="15" height="13.5" viewBox="0 0 15 13.5"><rect x="0" y="0" width="14.3" height="13.3" fill="#9aa1a6"/><path d="M2 2.5L5 5L2 7.5" fill="none" stroke="#3c3f41" stroke-width="1.2"/><rect x="6" y="8.5" width="5" height="1.2" fill="#3c3f41"/></svg>
<div class="t" style="left:287.5px;top:945.80px;font-size:13px;color:#bbbbbb;font-weight:normal;">Terminal</div>
<svg style="left:1843.5px;top:943px" width="18" height="17" viewBox="0 0 18 17"><path d="M16.1 8.5A7.6 7.6 0 1 0 8.5 16.1H16.1Z" fill="none" stroke="#afb1b3" stroke-width="1.7"/></svg>
<div class="t" style="left:1866px;top:946.13px;font-size:13.2px;color:#bbbbbb;font-weight:normal;letter-spacing:-0.2px">Event Log</div>
<svg style="left:49px;top:969.5px" width="16" height="16" viewBox="0 0 16 16"><rect x="3.8" y="0.8" width="11.2" height="11.2" fill="none" stroke="#afb1b3" stroke-width="1.5"/><path d="M0.8 3.5V15H12.3" fill="none" stroke="#afb1b3" stroke-width="1.5"/></svg>
<div class="t" style="left:1712px;top:970.45px;font-size:14px;color:#bbbbbb;font-weight:normal;">17:31</div>
<div class="t" style="left:1761px;top:970.45px;font-size:14px;color:#bbbbbb;font-weight:normal;letter-spacing:-1px">CRLF</div>
<div class="t" style="left:1808px;top:970.45px;font-size:14px;color:#bbbbbb;font-weight:normal;">UTF-8</div>
<div class="t" style="left:1862px;top:970.45px;font-size:14px;color:#bbbbbb;font-weight:normal;">4 spaces</div>
<div class="a" style="left:42px;top:989px;width:1878px;height:9px;background:linear-gradient(90deg,#1f3640 0%,#1f3640 55%,#1b2b43 100%);"></div>
<div class="a" style="left:102px;top:989px;width:430px;height:9px;background:#f0f0f0;"></div>
<div class="a" style="left:896.5px;top:989px;width:58px;height:9px;background:#4c5a62;"></div>
<div class="a" style="left:1073.5px;top:989px;width:58.5px;height:9px;background:#a86a35;"></div>
<div class="a" style="left:1310px;top:989px;width:58.5px;height:9px;background:#a86a35;"></div>
<div class="a" style="left:1833.5px;top:996.5px;width:3px;height:1.5px;background:#e8e8e8;"></div>
<div class="a" style="left:1840px;top:996.5px;width:3px;height:1.5px;background:#e8e8e8;"></div>
<div class="a" style="left:1852px;top:996.5px;width:5px;height:1.5px;background:#e8e8e8;"></div>
<div class="a" style="left:1860px;top:996.5px;width:6px;height:1.5px;background:#e8e8e8;"></div>
</body></html>
